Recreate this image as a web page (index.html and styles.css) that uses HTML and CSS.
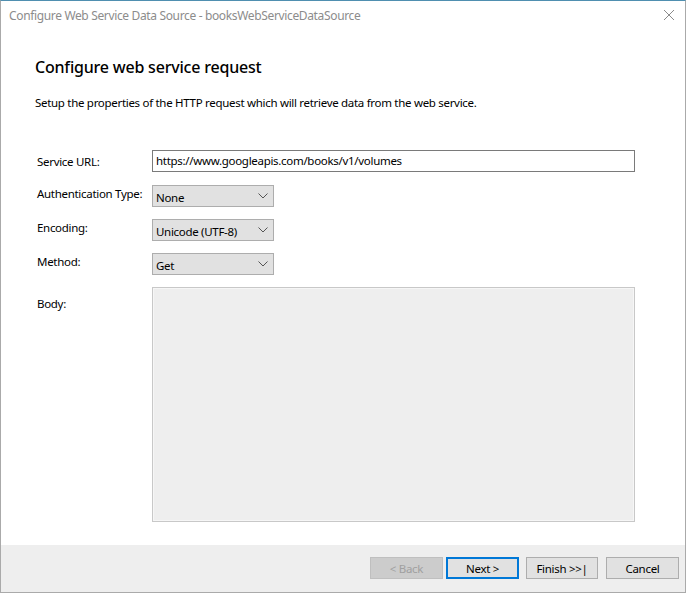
FILE: index.html
```html
<!DOCTYPE html>
<html>
<head>
<meta charset="utf-8">
<link rel="stylesheet" href="styles.css">
</head>
<body>
<div class="window">
  <div class="titlebar">
    <span class="title">Configure Web Service Data Source - booksWebServiceDataSource</span>
    <svg class="close" width="12" height="12" viewBox="0 0 12 12"><path d="M1 1L11 11M11 1L1 11" stroke="#8a8a8a" stroke-width="1" fill="none"/></svg>
  </div>
  <div class="content">
    <h1 class="heading">Configure web service request</h1>
    <p class="desc">Setup the properties of the HTTP request which will retrieve data from the web service.</p>
    <div class="form">
      <div class="row row-url">
        <label class="label">Service URL:</label>
        <div class="input">https://www.googleapis.com/books/v1/volumes</div>
      </div>
      <div class="row">
        <label class="label">Authentication Type:</label>
        <div class="select"><span>None</span><svg class="chev" width="10" height="6" viewBox="0 0 10 6"><path d="M0.5 0.5L5 5L9.5 0.5" stroke="#555" fill="none"/></svg></div>
      </div>
      <div class="row">
        <label class="label">Encoding:</label>
        <div class="select"><span>Unicode (UTF-8)</span><svg class="chev" width="10" height="6" viewBox="0 0 10 6"><path d="M0.5 0.5L5 5L9.5 0.5" stroke="#555" fill="none"/></svg></div>
      </div>
      <div class="row">
        <label class="label">Method:</label>
        <div class="select"><span>Get</span><svg class="chev" width="10" height="6" viewBox="0 0 10 6"><path d="M0.5 0.5L5 5L9.5 0.5" stroke="#555" fill="none"/></svg></div>
      </div>
      <div class="row row-body">
        <label class="label">Body:</label>
        <div class="textarea"></div>
      </div>
    </div>
  </div>
  <div class="footer">
    <button class="btn disabled">&lt; Back</button>
    <button class="btn primary">Next &gt;</button>
    <button class="btn finish">Finish &gt;&gt;|</button>
    <button class="btn cancel">Cancel</button>
  </div>
</div>
</body>
</html>
```

FILE: styles.css
```css
html, body {
  margin: 0;
  padding: 0;
  background: #ffffff;
}
body {
  font-family: "Noto Sans", "Open Sans", sans-serif;
  font-size: 12px;
  color: #000;
}
.window {
  width: 686px;
  height: 593px;
  box-sizing: border-box;
  border: 1px solid #aaaaaa;
  border-top: 1px solid #4f8fb0;
  display: flex;
  flex-direction: column;
  background: #fff;
}
.titlebar {
  height: 31px;
  display: flex;
  align-items: center;
  justify-content: space-between;
  padding: 0 10px 0 8px;
  flex: none;
}
.title {
  color: #8c8c8c;
  font-size: 12px;
  letter-spacing: -0.35px;
  margin-top: -2px;
}
.close {
  margin-top: -3px;
}
.content {
  flex: 1;
  padding: 0 0 0 34px;
}
.heading {
  font-size: 16px;
  font-weight: 500;
  margin: 24px 0 0 0;
  letter-spacing: -0.2px;
  line-height: 22px;
}
.desc {
  margin: 17px 0 0 0;
  font-size: 11.5px;
  letter-spacing: -0.3px;
  line-height: 16px;
}
.form {
  margin-top: 39px;
  display: flex;
  flex-direction: column;
  gap: 12px;
}
.row {
  display: flex;
  align-items: flex-start;
  height: 22px;
}
.row-url {
  margin-bottom: 1px;
}
.row-body {
  height: 235px;
}
.label {
  width: 115px;
  flex: none;
  padding-left: 2px;
  font-size: 11.5px;
  letter-spacing: -0.3px;
  line-height: 16px;
  padding-top: 1px;
}
.row-url .label { padding-top: 4px; }
.row-body .label { padding-top: 9px; }
.input {
  width: 483px;
  height: 22px;
  box-sizing: border-box;
  border: 1px solid #7a7a7a;
  padding: 2px 3px;
  font-size: 11.5px;
  letter-spacing: -0.3px;
  line-height: 16px;
}
.select {
  width: 122px;
  height: 22px;
  box-sizing: border-box;
  border: 1px solid #adadad;
  background: #e1e1e1;
  display: flex;
  align-items: center;
  justify-content: space-between;
  padding: 0 5px 0 3px;
  font-size: 11.5px;
  letter-spacing: -0.3px;
}
.select span { margin-top: 2px; }
.textarea {
  width: 483px;
  height: 235px;
  box-sizing: border-box;
  border: 1px solid #c8c8c8;
  box-shadow: inset 0 0 0 1px #f6f6f6;
  background: #eeeeee;
}
.footer {
  flex: none;
  height: 47px;
  background: #eeeeee;
  display: flex;
  justify-content: flex-end;
  align-items: flex-start;
  padding: 12px 6px 0 0;
  box-sizing: border-box;
}
.btn {
  width: 73px;
  height: 22px;
  box-sizing: border-box;
  border: 1px solid #adadad;
  background: #e1e1e1;
  font-family: "Noto Sans", "Open Sans", sans-serif;
  font-size: 11.5px;
  letter-spacing: -0.3px;
  color: #000;
  padding: 0;
  margin: 0;
}
.btn.disabled {
  color: #a0a0a0;
  background: #cccccc;
  border-color: #bfbfbf;
}
.btn.primary {
  border: 2px solid #0078d7;
  margin-left: 3px;
}
.btn.finish {
  width: 72px;
  margin-left: 7px;
}
.btn.cancel {
  margin-left: 8px;
}
```
